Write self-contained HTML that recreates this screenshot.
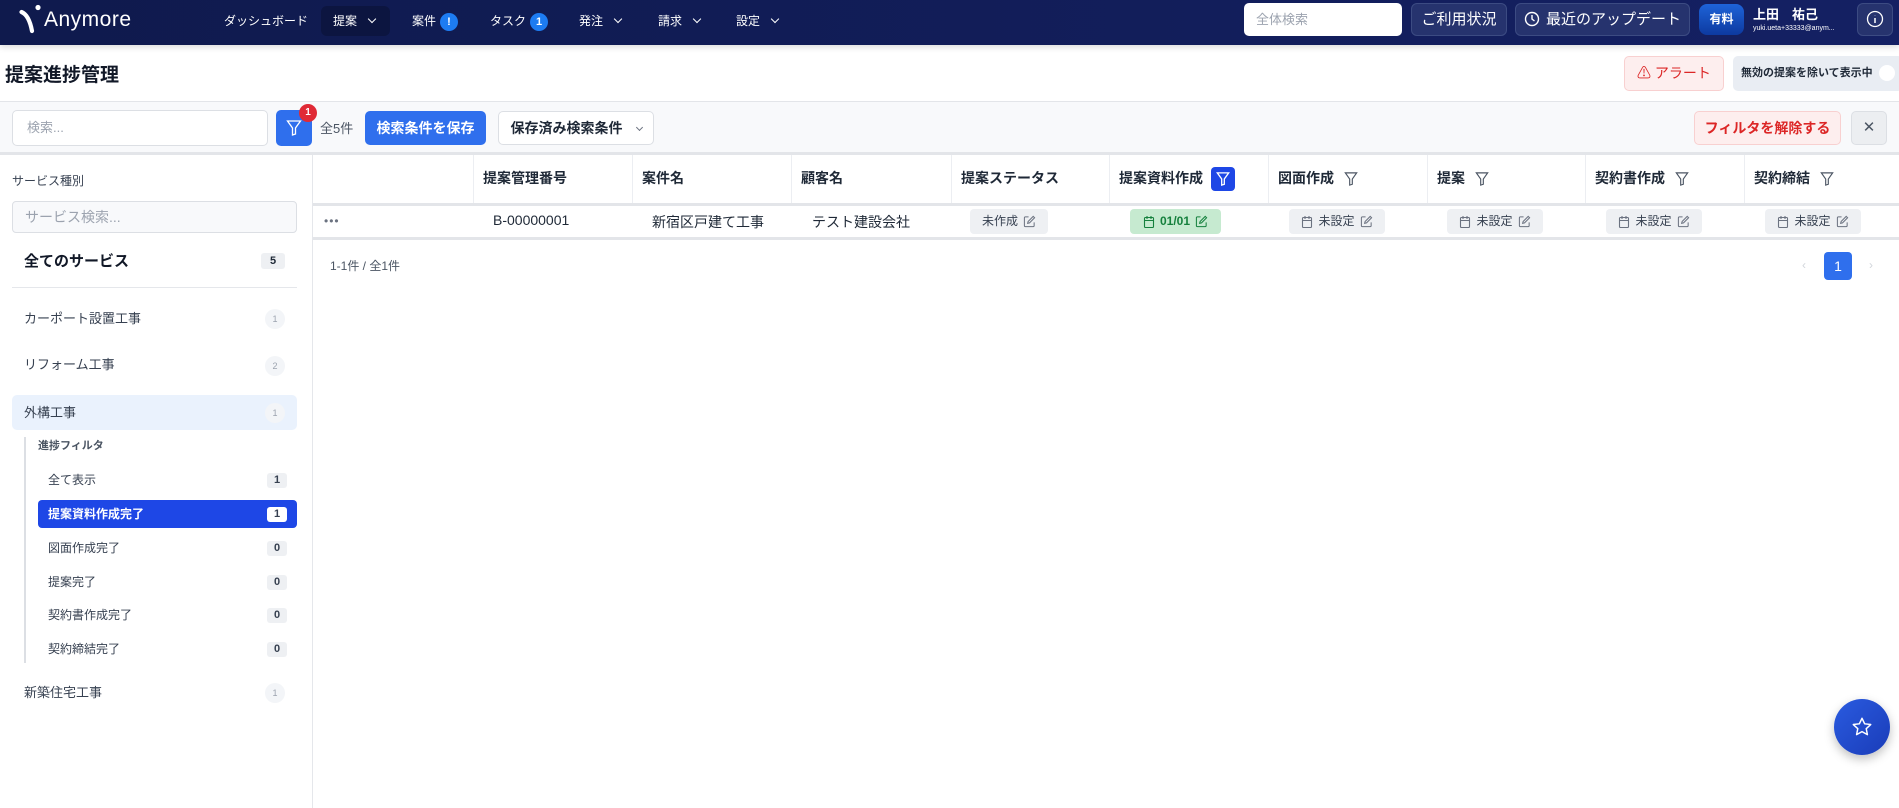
<!DOCTYPE html>
<html><head><meta charset="utf-8"><style>
*{box-sizing:border-box;margin:0;padding:0}
body{width:1899px;height:808px;overflow:hidden;background:#fff;font-family:"Liberation Sans","Noto Sans CJK JP",sans-serif;color:#1f2937;position:relative}
.a{position:absolute}
.nav{left:0;top:0;width:1899px;height:45px;background:linear-gradient(90deg,#0f1a4d,#142063);box-shadow:0 2px 6px rgba(0,0,0,.15)}
.nav .it{position:absolute;top:0;height:45px;line-height:42px;color:#fff;font-size:12px}
.badge{display:inline-block;width:18px;height:18px;border-radius:9px;background:#1d7cf2;color:#fff;font-size:11px;font-weight:bold;text-align:center;line-height:18px;margin-left:4px;vertical-align:middle}
.chev{display:inline-block;width:6px;height:6px;border-right:1.3px solid currentColor;border-bottom:1.3px solid currentColor;transform:rotate(45deg);margin-left:12px;vertical-align:3px}
.nb{position:absolute;top:3px;height:33px;border:1px solid #3c4b82;border-radius:6px;background:#26336e;color:#fff;font-size:15px;line-height:31px;text-align:center}
.btn{position:absolute;border-radius:5px;font-size:14px;text-align:center}
.th{position:absolute;top:155px;height:48px;line-height:46px;font-size:14px;font-weight:bold;border-left:1px solid #eceef2;padding-left:9px;color:#1f2937}
.fi{display:inline-block;vertical-align:middle;margin-left:10px}
.pill{position:absolute;top:209px;height:25px;border-radius:4px;background:#eef0f3;font-size:12px;line-height:25px;color:#374151;white-space:nowrap;display:flex;align-items:center;justify-content:center;gap:5px}
.pill svg{display:block}
.sb{position:absolute;left:24px;font-size:13px;color:#374151}
.cnt{position:absolute;left:267px;width:20px;height:15px;border-radius:3px;background:#eef0f3;font-size:11px;font-weight:bold;text-align:center;line-height:15px;color:#374151}
.circ{position:absolute;left:265px;width:20px;height:20px;border-radius:10px;background:#f3f5f8;color:#9ca3af;font-size:9px;text-align:center;line-height:20px}
</style></head><body>
<svg width="0" height="0" style="position:absolute"><defs>
<symbol id="cal" viewBox="0 0 12 14"><rect x="1.5" y="2.5" width="9" height="10" rx="1" fill="none" stroke="currentColor" stroke-width="1.1"/><path d="M1.5 5.5h9M4 1v3M8 1v3" stroke="currentColor" stroke-width="1.1"/></symbol>
<symbol id="ed" viewBox="0 0 14 14"><path d="M6 2H2.5A1 1 0 0 0 1.5 3v8.5a1 1 0 0 0 1 1H11a1 1 0 0 0 1-1V8" fill="none" stroke="currentColor" stroke-width="1.1"/><path d="M11 1.5l1.5 1.5L7 8.5 5 9l.5-2z" fill="none" stroke="currentColor" stroke-width="1.1"/></symbol>
</defs></svg>
<div class="a nav">
  <svg class="a" style="left:19px;top:4px" width="24" height="34" viewBox="0 0 24 34"><circle cx="19" cy="3.5" r="2.6" fill="#fff"/><path d="M2.5 8 Q10 11 13 27" stroke="#fff" stroke-width="4.2" fill="none" stroke-linecap="round"/></svg>
  <div class="it" style="left:44px;font-size:21px;line-height:40px;letter-spacing:.5px">Anymore</div>
  <div class="it" style="left:224px">ダッシュボード</div>
  <div class="a" style="left:321px;top:6px;width:69px;height:30px;background:#0c1540;border-radius:6px"></div>
  <div class="it" style="left:333px">提案<span class="chev"></span></div>
  <div class="it" style="left:412px">案件<span class="badge">!</span></div>
  <div class="it" style="left:490px">タスク<span class="badge">1</span></div>
  <div class="it" style="left:579px">発注<span class="chev"></span></div>
  <div class="it" style="left:658px">請求<span class="chev"></span></div>
  <div class="it" style="left:736px">設定<span class="chev"></span></div>
  <div class="a" style="left:1244px;top:3px;width:158px;height:33px;background:#fff;border-radius:5px;color:#9ca3af;font-size:13px;line-height:33px;padding-left:12px">全体検索</div>
  <div class="nb" style="left:1411px;width:96px">ご利用状況</div>
  <div class="nb" style="left:1515px;width:175px"><svg width="16" height="16" viewBox="0 0 16 16" style="vertical-align:-3px;margin-right:6px"><circle cx="8" cy="8" r="6.5" stroke="#fff" stroke-width="1.4" fill="none"/><path d="M8 4v4l2.5 2" stroke="#fff" stroke-width="1.4" fill="none"/></svg>最近のアップデート</div>
  <div class="a" style="left:1699px;top:4px;width:45px;height:31px;border-radius:8px;background:linear-gradient(#1e63d8,#0d3aa0);color:#fff;font-size:12px;font-weight:bold;line-height:31px;text-align:center">有料</div>
  <div class="a" style="left:1753px;top:4px;color:#fff;font-size:13px;font-weight:bold">上田　祐己</div>
  <div class="a" style="left:1753px;top:25px;color:#fff;font-size:7px">yuki.ueta+33333@anym...</div>
  <div class="nb" style="left:1857px;width:36px"><svg width="18" height="18" viewBox="0 0 18 18" style="vertical-align:-4px"><circle cx="9" cy="9" r="7.5" stroke="#fff" stroke-width="1.3" fill="none"/><path d="M9 8v5M9 5.2v.3" stroke="#fff" stroke-width="1.5"/></svg></div>
</div>
<div class="a" style="left:5px;top:60px;font-size:19px;font-weight:bold;color:#111827">提案進捗管理</div>
<div class="btn" style="left:1624px;top:56px;width:100px;height:35px;background:#fdeeee;border:1px solid #f8d0d0;color:#dc2626;line-height:33px">⚠ アラート</div>
<div class="btn" style="left:1733px;top:56px;width:170px;height:35px;background:#e9edf3;color:#1f2937;font-size:11px;font-weight:bold;line-height:35px;text-align:left;padding-left:8px">無効の提案を除いて表示中 <span style="display:inline-block;width:16px;height:16px;border-radius:8px;background:#fff;vertical-align:middle;margin-left:3px"></span></div>
<div class="a" style="left:0;top:101px;width:1899px;height:54px;background:#f8f9fb;border-top:1px solid #e3e5e9;border-bottom:3px solid #e3e5e9"></div>
<div class="a" style="left:12px;top:110px;width:256px;height:36px;background:#fff;border:1px solid #dcdfe4;border-radius:5px;color:#9ca3af;font-size:13px;line-height:34px;padding-left:14px">検索...</div>
<div class="btn" style="left:276px;top:110px;width:36px;height:36px;background:#2f6fed"><svg width="16" height="18" viewBox="0 0 16 18" style="margin-top:9px"><path d="M1.5 2h13l-5 7v6l-3 1V9z" stroke="#fff" stroke-width="1.3" fill="none"/></svg></div>
<div class="a" style="left:299px;top:104px;width:18px;height:18px;border-radius:9px;background:#e02a36;color:#fff;font-size:10px;font-weight:bold;text-align:center;line-height:18px">1</div>
<div class="a" style="left:320px;top:118px;font-size:13px;color:#4b5563">全5件</div>
<div class="btn" style="left:365px;top:111px;width:121px;height:34px;background:#2f6fed;color:#fff;font-weight:bold;line-height:34px">検索条件を保存</div>
<div class="btn" style="left:498px;top:111px;width:156px;height:34px;background:#fff;border:1px solid #dcdfe4;font-weight:bold;line-height:32px;color:#1f2937">保存済み検索条件<span class="chev" style="margin-left:14px;width:5px;height:5px;color:#6b7280"></span></div>
<div class="btn" style="left:1694px;top:111px;width:147px;height:34px;background:#fdeeee;border:1px solid #f8d0d0;color:#dc2626;font-weight:bold;line-height:32px">フィルタを解除する</div>
<div class="btn" style="left:1851px;top:111px;width:36px;height:34px;background:#eceef1;border:1px solid #dcdfe4;color:#4b5563;line-height:32px;font-size:15px">✕</div>
<!-- sidebar -->
<div class="a" style="left:312px;top:155px;width:1px;height:653px;background:#e5e7eb"></div>
<div class="a" style="left:12px;top:172px;font-size:12px;color:#374151">サービス種別</div>
<div class="a" style="left:12px;top:201px;width:285px;height:32px;background:#f8f9fb;border:1px solid #dcdfe4;border-radius:4px;color:#9ca3af;font-size:14px;line-height:30px;padding-left:12px">サービス検索...</div>
<div class="a" style="left:24px;top:250px;font-size:15px;font-weight:bold;color:#111827">全てのサービス</div>
<div class="a" style="left:261px;top:253px;width:24px;height:16px;border-radius:3px;background:#eef0f3;font-size:11px;font-weight:bold;text-align:center;line-height:16px">5</div>
<div class="a" style="left:12px;top:287px;width:285px;height:1px;background:#e5e7eb"></div>
<div class="sb" style="top:308px">カーポート設置工事</div><div class="circ" style="top:309px">1</div>
<div class="sb" style="top:354px">リフォーム工事</div><div class="circ" style="top:356px">2</div>
<div class="a" style="left:12px;top:395px;width:285px;height:35px;background:#eaf2fd;border-radius:5px"></div>
<div class="sb" style="top:402px">外構工事</div><div class="circ" style="top:403px">1</div>
<div class="a" style="left:24px;top:437px;width:2px;height:226px;background:#dcdfe4"></div>
<div class="a" style="left:38px;top:437px;font-size:11px;font-weight:bold;color:#4b5563">進捗フィルタ</div>
<div class="a" style="left:38px;top:500px;width:259px;height:28px;background:#1e47e6;border-radius:4px"></div>
<div class="sb" style="left:48px;top:471px;font-size:12px">全て表示</div><div class="cnt" style="top:473px">1</div>
<div class="sb" style="left:48px;top:505px;font-size:12px;color:#fff;font-weight:bold">提案資料作成完了</div><div class="cnt" style="top:507px;background:#fff">1</div>
<div class="sb" style="left:48px;top:539px;font-size:12px">図面作成完了</div><div class="cnt" style="top:541px">0</div>
<div class="sb" style="left:48px;top:573px;font-size:12px">提案完了</div><div class="cnt" style="top:575px">0</div>
<div class="sb" style="left:48px;top:606px;font-size:12px">契約書作成完了</div><div class="cnt" style="top:608px">0</div>
<div class="sb" style="left:48px;top:640px;font-size:12px">契約締結完了</div><div class="cnt" style="top:642px">0</div>
<div class="sb" style="top:682px">新築住宅工事</div><div class="circ" style="top:683px">1</div>
<!-- table -->
<div class="th" style="left:473px;width:159px">提案管理番号</div>
<div class="th" style="left:632px;width:159px">案件名</div>
<div class="th" style="left:791px;width:160px">顧客名</div>
<div class="th" style="left:951px;width:158px">提案ステータス</div>
<div class="th" style="left:1109px;width:159px">提案資料作成<span class="fi" style="margin-left:8px;width:24px;height:24px;background:#1e47e6;border-radius:4px;line-height:0;text-align:center"><svg width="14" height="16" viewBox="0 0 16 18" style="margin-top:4px"><path d="M1.5 2h13l-5 7v6l-3 1V9z" stroke="#fff" stroke-width="1.5" fill="none"/></svg></span></div>
<div class="th" style="left:1268px;width:159px">図面作成<svg class="fi" width="14" height="16" viewBox="0 0 16 18"><path d="M1.5 2h13l-5 7v6l-3 1V9z" stroke="#4b5563" stroke-width="1.3" fill="none"/></svg></div>
<div class="th" style="left:1427px;width:158px">提案<svg class="fi" width="14" height="16" viewBox="0 0 16 18"><path d="M1.5 2h13l-5 7v6l-3 1V9z" stroke="#4b5563" stroke-width="1.3" fill="none"/></svg></div>
<div class="th" style="left:1585px;width:159px">契約書作成<svg class="fi" width="14" height="16" viewBox="0 0 16 18"><path d="M1.5 2h13l-5 7v6l-3 1V9z" stroke="#4b5563" stroke-width="1.3" fill="none"/></svg></div>
<div class="th" style="left:1744px;width:155px">契約締結<svg class="fi" width="14" height="16" viewBox="0 0 16 18"><path d="M1.5 2h13l-5 7v6l-3 1V9z" stroke="#4b5563" stroke-width="1.3" fill="none"/></svg></div>
<div class="a" style="left:313px;top:203px;width:1586px;height:3px;background:#e3e5e9"></div>
<div class="a" style="left:313px;top:237px;width:1586px;height:3px;background:#e3e5e9"></div>
<div class="a" style="left:324px;top:214px;font-size:12px;color:#6b7280;letter-spacing:1px">•••</div>
<div class="a" style="left:493px;top:212px;font-size:14px">B-00000001</div>
<div class="a" style="left:652px;top:212px;font-size:14px">新宿区戸建て工事</div>
<div class="a" style="left:812px;top:212px;font-size:14px">テスト建設会社</div>
<div class="pill" style="left:970px;width:78px">未作成<svg width="13" height="13" style="color:#6b7280"><use href="#ed"/></svg></div>
<div class="pill" style="left:1130px;width:91px;background:#c6ead0;color:#15803d;font-weight:bold"><svg width="12" height="14"><use href="#cal"/></svg>01/01<svg width="13" height="13"><use href="#ed"/></svg></div>
<div class="pill" style="left:1289px;width:96px"><svg width="12" height="14" style="color:#6b7280"><use href="#cal"/></svg>未設定<svg width="13" height="13" style="color:#6b7280"><use href="#ed"/></svg></div>
<div class="pill" style="left:1447px;width:96px"><svg width="12" height="14" style="color:#6b7280"><use href="#cal"/></svg>未設定<svg width="13" height="13" style="color:#6b7280"><use href="#ed"/></svg></div>
<div class="pill" style="left:1606px;width:96px"><svg width="12" height="14" style="color:#6b7280"><use href="#cal"/></svg>未設定<svg width="13" height="13" style="color:#6b7280"><use href="#ed"/></svg></div>
<div class="pill" style="left:1765px;width:96px"><svg width="12" height="14" style="color:#6b7280"><use href="#cal"/></svg>未設定<svg width="13" height="13" style="color:#6b7280"><use href="#ed"/></svg></div>
<div class="a" style="left:330px;top:257px;font-size:12px;color:#4b5563">1-1件 / 全1件</div>
<div class="a" style="left:1802px;top:258px;font-size:12px;color:#d1d5db">‹</div>
<div class="a" style="left:1824px;top:252px;width:28px;height:28px;border-radius:4px;background:#2f6fed;color:#fff;font-size:14px;text-align:center;line-height:28px">1</div>
<div class="a" style="left:1869px;top:258px;font-size:12px;color:#d1d5db">›</div>
<div class="a" style="left:1834px;top:699px;width:56px;height:56px;border-radius:28px;background:linear-gradient(135deg,#2a5be0,#1a3cb8);box-shadow:0 4px 10px rgba(0,0,0,.25);text-align:center;line-height:56px"><svg width="22" height="22" viewBox="0 0 24 24" style="vertical-align:middle"><path d="M12 2.5l2.9 6 6.6.8-4.9 4.5 1.3 6.5L12 17l-5.9 3.3 1.3-6.5L2.5 9.3l6.6-.8z" stroke="#fff" stroke-width="1.6" fill="none" stroke-linejoin="round"/></svg></div>
</body></html>
